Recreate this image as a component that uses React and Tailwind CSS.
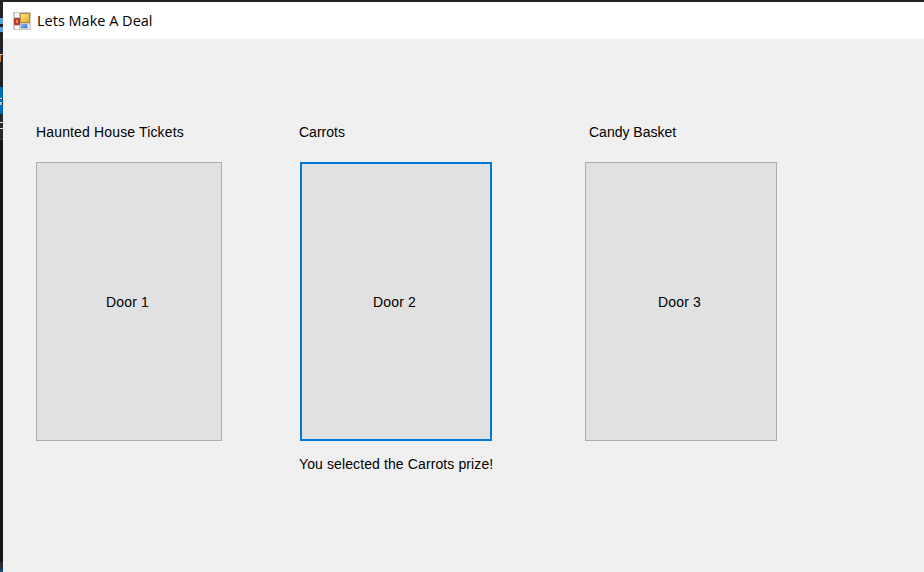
const strip = [
  'h-[18px] bg-[#222126]',
  'h-[6px] bg-[#5a9fd8]',
  'h-[3px] bg-[#222126]',
  'h-[5px] bg-[#5a9fd8]',
  'h-[22px] bg-[#222126]',
  'h-[1px] bg-[#d8c8b8]',
  'h-[7px] w-px bg-[#c97a3c]',
  'h-[25px] bg-[#222126]',
  'h-[11px] bg-[#0068b0]',
  'h-[1px] w-[2px] bg-[#e0e8f0]',
  'h-[3px] bg-[#0068b0]',
  'h-[3px] w-[2px] bg-[#8fd0e8]',
  'h-[9px] bg-[#0068b0]',
  'h-[8px] bg-[#28272e]',
  'h-[1px] bg-[#e0e0e0]',
  'h-[5px] bg-[#28272e]',
  'h-[1px] bg-[#e0e0e0]',
  'h-[10px] bg-[#28272e]',
  'h-[1px] bg-[#3a3a40]',
  'h-[422px] bg-[#151515]',
  'h-[7px] bg-[#2b2b35]',
  'h-[3px] bg-[#1d4a70]',
];

function FormIcon() {
  return (
    <svg width="18" height="18" viewBox="0 0 18 18" shapeRendering="crispEdges">
      <defs>
        <linearGradient id="gold" x1="0" y1="0" x2="1" y2="1">
          <stop offset="0" stopColor="#ffe68a" />
          <stop offset="1" stopColor="#e6ac1c" />
        </linearGradient>
        <linearGradient id="blue" x1="0" y1="0" x2="1" y2="1">
          <stop offset="0" stopColor="#8ab8ff" />
          <stop offset="1" stopColor="#3f76dc" />
        </linearGradient>
      </defs>
      <rect width="18" height="18" fill="#c9c9c9" />
      <rect x="2" y="1" width="4" height="4" fill="#fafafa" />
      <rect x="2" y="14" width="4" height="3" fill="#fafafa" />
      <rect x="15" y="12" width="2" height="5" fill="#e4e4e4" />
      <rect x="1" y="6" width="6" height="7" fill="#b83a30" />
      <rect x="3" y="8" width="2" height="3" fill="#e58a80" />
      <rect x="7" y="1" width="10" height="10" fill="#b08a3c" />
      <rect x="8" y="2" width="8" height="8" fill="url(#gold)" />
      <rect x="8" y="12" width="6" height="4" fill="url(#blue)" />
    </svg>
  );
}

function Door({ prize, name, width, labelClass, selected, message }) {
  return (
    <section className={`${width} flex flex-col whitespace-nowrap`}>
      <div className={`h-[40px] ${labelClass}`}>{prize}</div>
      <button
        className={`flex h-[279px] w-full items-center justify-center bg-[#e1e1e1] pr-[3px] tracking-[0.15px] ${
          selected ? 'border-2 border-[#0078d7]' : 'border border-[#adadad]'
        }`}
      >
        {name}
      </button>
      {message && <div className="-ml-px mt-[13px] tracking-[0.11px]">{message}</div>}
    </section>
  );
}

export default function App() {
  return (
    <div className="flex h-[572px] w-[924px] overflow-hidden bg-[#222126]">
      <div className="w-[3px] shrink-0">
        {strip.map((s, i) => (
          <div key={i} className={s} />
        ))}
      </div>
      <div className="mt-[2px] flex flex-1 flex-col bg-[#f0f0f0]">
        <header className="flex h-[37px] items-center bg-white pl-[10px] font-['Open_Sans',sans-serif] text-[14.5px] text-black">
          <FormIcon />
          <span className="ml-[6px] whitespace-nowrap">Lets Make A Deal</span>
        </header>
        <main className="flex items-start pl-[33px] pt-[83px] font-['Liberation_Sans',Arial,sans-serif] text-[14px] leading-[20px] text-black">
          <Door
            prize="Haunted House Tickets"
            name="Door 1"
            width="w-[186px] mr-[78px]"
            labelClass="tracking-[0.15px]"
          />
          <Door
            prize="Carrots"
            name="Door 2"
            width="w-[192px] mr-[93px]"
            labelClass="-ml-px"
            selected
            message="You selected the Carrots prize!"
          />
          <Door prize="Candy Basket" name="Door 3" width="w-[192px]" labelClass="pl-[4px]" />
        </main>
      </div>
    </div>
  );
}
